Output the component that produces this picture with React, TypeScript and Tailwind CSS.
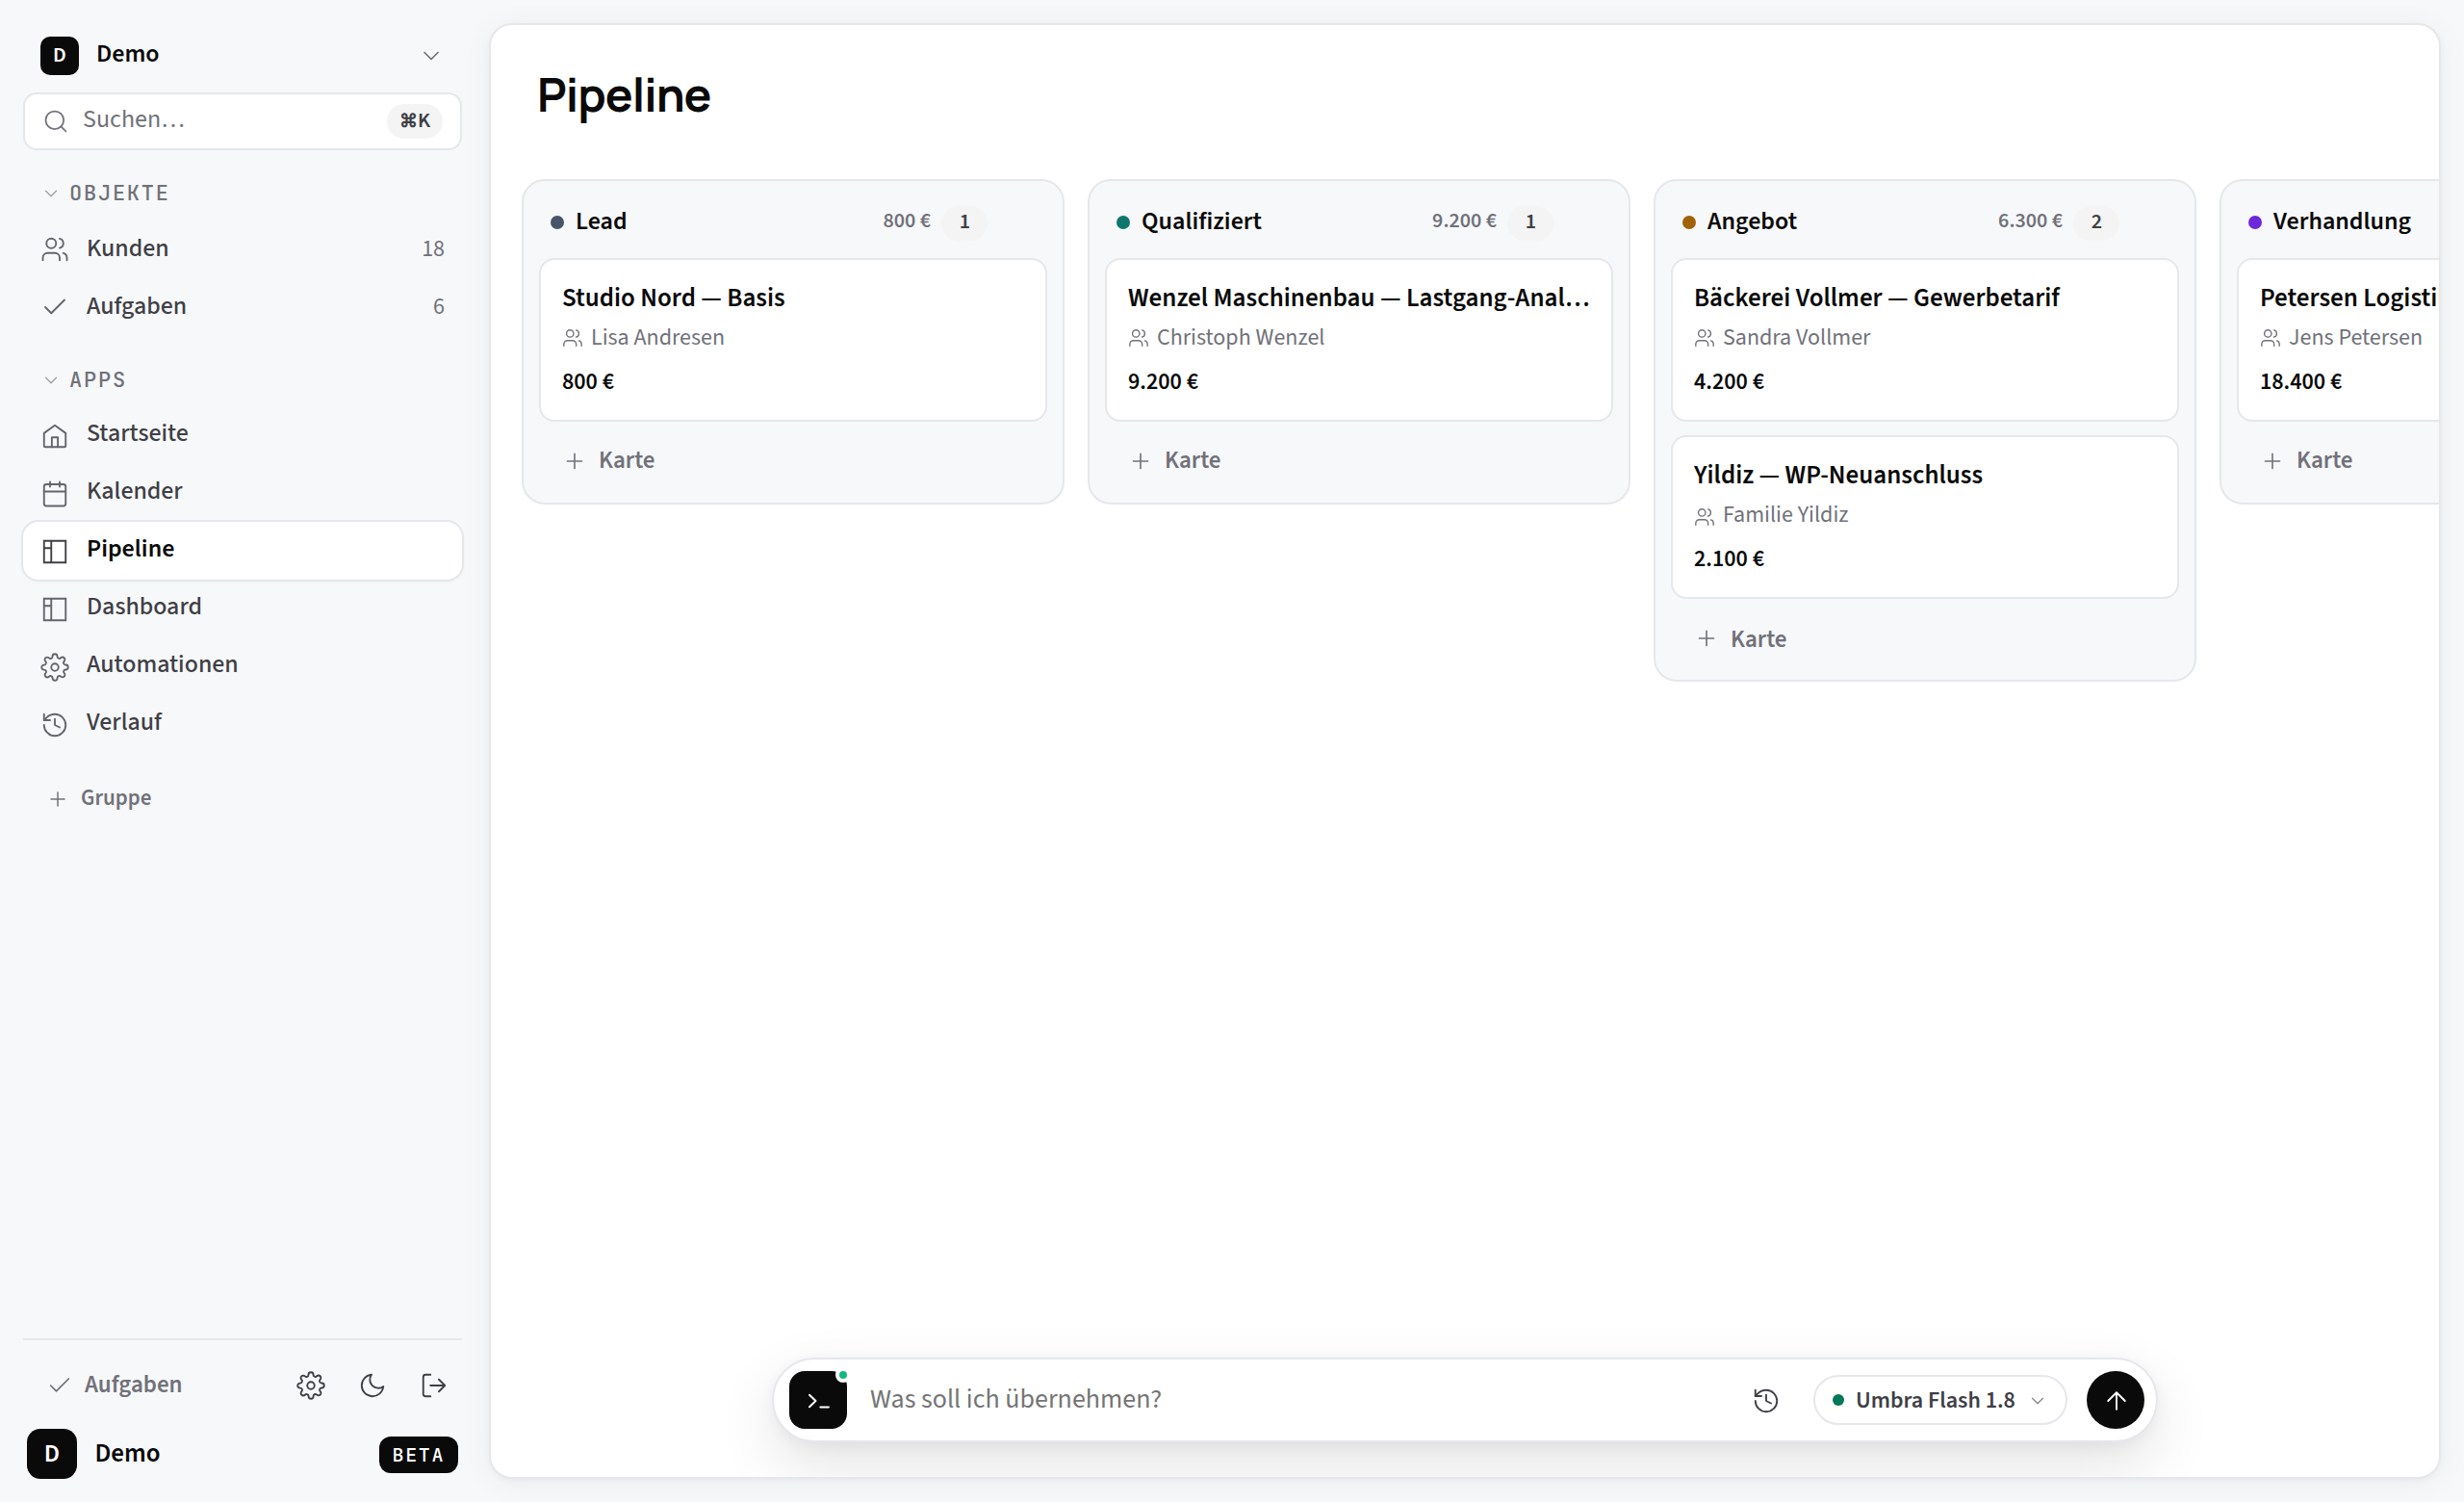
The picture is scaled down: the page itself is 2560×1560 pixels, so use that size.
import type { ReactNode } from "react";

type IconProps = { className: string; children: ReactNode };

function Icon({ className, children }: IconProps) {
  return (
    <svg
      viewBox="0 0 24 24"
      fill="none"
      stroke="currentColor"
      strokeWidth={1.5}
      strokeLinecap="round"
      strokeLinejoin="round"
      className={`shrink-0 ${className}`}
    >
      {children}
    </svg>
  );
}

const glyphs = {
  chevron: <path d="m6 9 6 6 6-6" />,
  plus: <path d="M5 12h14M12 5v14" />,
  check: <path d="M20 6 9 17l-5-5" />,
  arrowUp: <path d="m5 12 7-7 7 7M12 19V5" />,
  search: (
    <>
      <circle cx="11" cy="11" r="8" />
      <path d="m21 21-4.35-4.35" />
    </>
  ),
  users: (
    <>
      <path d="M16 21v-2a4 4 0 0 0-4-4H6a4 4 0 0 0-4 4v2" />
      <circle cx="9" cy="7" r="4" />
      <path d="M22 21v-2a4 4 0 0 0-3-3.87M16 3.13a4 4 0 0 1 0 7.75" />
    </>
  ),
  home: (
    <>
      <path d="M3 9.5 12 3l9 6.5V20a1 1 0 0 1-1 1H4a1 1 0 0 1-1-1V9.5Z" />
      <path d="M9.5 21v-8h5v8" />
    </>
  ),
  calendar: (
    <>
      <rect x="3" y="4" width="18" height="18" rx="2" />
      <path d="M16 2v4M8 2v4M3 10h18" />
    </>
  ),
  board: <path strokeLinejoin="miter" strokeLinecap="butt" d="M3 3h18v18H3zM9 3v18M3 9h6" />,
  gear: (
    <>
      <circle cx="12" cy="12" r="3" />
      <path d="M19.4 15a1.65 1.65 0 0 0 .33 1.82l.06.06a2 2 0 0 1 0 2.83 2 2 0 0 1-2.83 0l-.06-.06a1.65 1.65 0 0 0-1.82-.33 1.65 1.65 0 0 0-1 1.51V21a2 2 0 0 1-2 2 2 2 0 0 1-2-2v-.09A1.65 1.65 0 0 0 9 19.4a1.65 1.65 0 0 0-1.82.33l-.06.06a2 2 0 0 1-2.83 0 2 2 0 0 1 0-2.83l.06-.06a1.65 1.65 0 0 0 .33-1.82 1.65 1.65 0 0 0-1.51-1H3a2 2 0 0 1-2-2 2 2 0 0 1 2-2h.09A1.65 1.65 0 0 0 4.6 9a1.65 1.65 0 0 0-.33-1.82l-.06-.06a2 2 0 0 1 0-2.83 2 2 0 0 1 2.83 0l.06.06a1.65 1.65 0 0 0 1.82.33H9a1.65 1.65 0 0 0 1-1.51V3a2 2 0 0 1 2-2 2 2 0 0 1 2 2v.09a1.65 1.65 0 0 0 1 1.51 1.65 1.65 0 0 0 1.82-.33l.06-.06a2 2 0 0 1 2.83 0 2 2 0 0 1 0 2.83l-.06.06a1.65 1.65 0 0 0-.33 1.82V9a1.65 1.65 0 0 0 1.51 1H21a2 2 0 0 1 2 2 2 2 0 0 1-2 2h-.09a1.65 1.65 0 0 0-1.51 1z" />
    </>
  ),
  history: (
    <>
      <path d="M3 12a9 9 0 1 0 9-9 9.75 9.75 0 0 0-6.74 2.74L3 8" />
      <path d="M3 3v5h5M12 7v5l4 2" />
    </>
  ),
  moon: <path d="M21 12.79A9 9 0 1 1 11.21 3 7 7 0 0 0 21 12.79z" />,
  logout: <path d="M9 21H5a2 2 0 0 1-2-2V5a2 2 0 0 1 2-2h4M16 17l5-5-5-5M21 12H9" />,
};

type NavItem = { label: string; icon: ReactNode; count?: number; active?: boolean };

const objects: NavItem[] = [
  { label: "Kunden", icon: glyphs.users, count: 18 },
  { label: "Aufgaben", icon: glyphs.check, count: 6 },
];

const apps: NavItem[] = [
  { label: "Startseite", icon: glyphs.home },
  { label: "Kalender", icon: glyphs.calendar },
  { label: "Pipeline", icon: glyphs.board, active: true },
  { label: "Dashboard", icon: glyphs.board },
  { label: "Automationen", icon: glyphs.gear },
  { label: "Verlauf", icon: glyphs.history },
];

type Deal = { title: string; person: string; amount: string };
type Stage = { name: string; dot: string; total: string; deals: Deal[] };

const stages: Stage[] = [
  {
    name: "Lead",
    dot: "bg-[#475569]",
    total: "800 €",
    deals: [{ title: "Studio Nord — Basis", person: "Lisa Andresen", amount: "800 €" }],
  },
  {
    name: "Qualifiziert",
    dot: "bg-[#0f766e]",
    total: "9.200 €",
    deals: [{ title: "Wenzel Maschinenbau — Lastgang-Analyse", person: "Christoph Wenzel", amount: "9.200 €" }],
  },
  {
    name: "Angebot",
    dot: "bg-[#a16207]",
    total: "6.300 €",
    deals: [
      { title: "Bäckerei Vollmer — Gewerbetarif", person: "Sandra Vollmer", amount: "4.200 €" },
      { title: "Yildiz — WP-Neuanschluss", person: "Familie Yildiz", amount: "2.100 €" },
    ],
  },
  {
    name: "Verhandlung",
    dot: "bg-[#6d28d9]",
    total: "18.400 €",
    deals: [{ title: "Petersen Logistik — Rahmenvertrag", person: "Jens Petersen", amount: "18.400 €" }],
  },
];

function SectionHeading({ label }: { label: string }) {
  return (
    <div className="flex h-[30px] items-center gap-2 pl-[18px]">
      <Icon className="size-[22px] text-[#a1a1aa]">{glyphs.chevron}</Icon>
      <span className="font-['JetBrains_Mono',monospace] text-[22px] leading-[30px] font-medium tracking-[0.08em] text-[#71717a]">
        {label}
      </span>
    </div>
  );
}

function NavRow({ item, lowIcon }: { item: NavItem; lowIcon?: boolean }) {
  return (
    <div
      className={`flex h-[60px] items-center gap-[18px] rounded-[16px] px-[18px] ${
        item.active
          ? "bg-white font-semibold text-[#0a0a0a] shadow-[0_0_0_2px_#e5e7eb,0_2px_4px_2px_rgba(0,0,0,0.02)]"
          : "font-medium text-[#3f3f46]"
      }`}
    >
      <span className={`${lowIcon ? "pt-[2px]" : "pb-[2px]"} ${item.active ? "text-[#3f3f46]" : "text-[#64646c]"}`}>
        <Icon className="block size-[30px]">{item.icon}</Icon>
      </span>
      <span className="flex-1 pb-[4px] text-[26px] leading-[36px]">{item.label}</span>
      {item.count !== undefined && (
        <span className="pb-[2px] text-[24px] leading-[36px] font-normal text-[#71717a]">{item.count}</span>
      )}
    </div>
  );
}

function Sidebar() {
  return (
    <aside className="flex w-[508px] shrink-0 flex-col pr-[28px] pl-[24px]">
      <div className="mt-[34px] flex h-[48px] items-center px-[18px]">
        <span className="flex size-[40px] items-center justify-center rounded-[10px] bg-[#0a0a0a] pb-[2px] text-[22px] leading-[30px] font-semibold text-white">
          D
        </span>
        <span className="flex-1 pb-[4px] pl-[18px] text-[26px] leading-[36px] font-semibold text-[#0a0a0a]">Demo</span>
        <Icon className="size-[28px] text-[#71717a]">{glyphs.chevron}</Icon>
      </div>

      <div className="mt-[14px] flex h-[60px] items-center rounded-[14px] border-2 border-[#e5e7eb] bg-white pr-[18px] pl-[18px]">
        <Icon className="size-[28px] text-[#71717a]">{glyphs.search}</Icon>
        <span className="flex-1 pb-[4px] pl-[14px] text-[26px] leading-[36px] text-[#71717a]">Suchen…</span>
        <kbd className="flex h-[36px] w-[58px] items-center justify-center rounded-full bg-[#f4f4f5] font-['Source_Sans_3',sans-serif] text-[22px] leading-[30px] font-semibold text-[#3f3f46]">
          <span className="pb-[4px] font-['Noto_Sans_Symbols',sans-serif] text-[19px] leading-[30px]">⌘</span>
          <span className="pb-[2px]">K</span>
        </kbd>
      </div>

      <div className="mt-[30px]">
        <SectionHeading label="OBJEKTE" />
      </div>
      <nav className="mt-[14px]">
        {objects.map((item) => (
          <NavRow key={item.label} item={item} />
        ))}
      </nav>

      <div className="mt-[30px]">
        <SectionHeading label="APPS" />
      </div>
      <nav className="mt-[12px]">
        {apps.map((item) => (
          <NavRow key={item.label} item={item} lowIcon />
        ))}
      </nav>

      <div className="mt-[24px] flex h-[48px] items-center gap-3 pl-[24px] text-[#71717a]">
        <Icon className="size-[24px]">{glyphs.plus}</Icon>
        <span className="pb-[2px] text-[23px] leading-[32px] font-semibold">Gruppe</span>
      </div>

      <div className="mt-auto border-t-2 border-[#e5e7eb]">
        <div className="mt-[23px] flex h-[48px] items-center pr-[14px] pl-[24px]">
          <Icon className="size-[28px] text-[#71717a]">{glyphs.check}</Icon>
          <span className="flex-1 pb-[2px] pl-[12px] text-[25px] leading-[36px] font-semibold text-[#71717a]">
            Aufgaben
          </span>
          <div className="flex items-center gap-[34px] text-[#3f3f46]">
            <Icon className="size-[30px]">{glyphs.gear}</Icon>
            <Icon className="size-[30px]">{glyphs.moon}</Icon>
            <Icon className="size-[30px]">{glyphs.logout}</Icon>
          </div>
        </div>
        <div className="mt-[21px] mb-[24px] flex h-[52px] items-center pr-[4px] pl-[4px]">
          <span className="flex size-[52px] items-center justify-center rounded-[14px] bg-[#0a0a0a] text-[26px] leading-[36px] font-semibold text-white">
            D
          </span>
          <span className="flex-1 pl-[18.5px] text-[27px] leading-[36px] font-semibold text-[#0a0a0a]">Demo</span>
          <span className="flex h-[38px] items-center rounded-[12px] bg-[#0a0a0a] px-[14px] mt-[2px] font-['JetBrains_Mono',monospace] text-[20px] font-medium tracking-[0.08em] text-white">
            BETA
          </span>
        </div>
      </div>
    </aside>
  );
}

function DealCard({ deal, offset }: { deal: Deal; offset: boolean }) {
  return (
    <article className="h-[170px] rounded-[16px] border-2 border-[#e5e7eb] bg-white px-[22px] pt-[22px]">
      <h3 className="truncate text-[27px] leading-[36px] font-semibold text-[#0a0a0a]">{deal.title}</h3>
      <div className="mt-[6px] flex h-[34px] items-center gap-[8px] text-[#71717a]">
        <Icon className={offset ? "mt-[4px] size-[22px]" : "size-[22px]"}>{glyphs.users}</Icon>
        <span className="text-[24px] leading-[34px]">{deal.person}</span>
      </div>
      <p className="mt-[11px] text-[24px] leading-[36px] font-semibold text-[#0a0a0a]">{deal.amount}</p>
    </article>
  );
}

function StageColumn({ stage }: { stage: Stage }) {
  return (
    <section className="w-[564px] shrink-0 rounded-[24px] border-2 border-[#e5e7eb] bg-[#f7f8fa] px-[16px] pb-[16px]">
      <header className="flex h-[80px] items-center pt-[8px] pr-[62px] pl-[12px]">
        <span className={`mb-[2px] size-[14px] shrink-0 rounded-full ${stage.dot}`} />
        <h2 className="flex-1 pb-[4px] pl-[12px] text-[26px] leading-[36px] font-semibold text-[#0a0a0a]">{stage.name}</h2>
        <span className="pb-[6px] text-[22px] leading-[30px] font-semibold text-[#71717a]">{stage.total}</span>
        <span className="ml-[11px] flex h-[36px] w-[48px] items-center justify-center rounded-full bg-[#f4f4f5] pb-[5px] pl-px text-[22px] leading-[30px] font-semibold text-[#3f3f46]">
          {stage.deals.length}
        </span>
      </header>
      <div className="flex flex-col gap-[14px]">
        {stage.deals.map((deal, index) => (
          <DealCard key={deal.title} deal={deal} offset={index > 0} />
        ))}
      </div>
      <div className="mt-[11px] flex h-[57px] items-center gap-[12px] pt-[3px] pl-[24px] text-[#71717a]">
        <Icon className="size-[26px]">{glyphs.plus}</Icon>
        <span className={`text-[25px] leading-[36px] font-semibold ${stage.deals.length > 1 ? "pt-[2px]" : "pb-[2px]"}`}>
          Karte
        </span>
      </div>
    </section>
  );
}

function CommandBar() {
  return (
    <div className="mx-auto mb-[36px] flex h-[88px] w-[1440px] items-center rounded-full border-2 border-[#e5e7eb] bg-white pr-[12px] pl-[16px] shadow-[0_24px_64px_rgba(0,0,0,0.11),0_4px_16px_rgba(0,0,0,0.05)]">
      <div className="relative size-[60px] rounded-[16px] bg-[#0a0a0a] text-white">
        <svg
          viewBox="0 0 60 60"
          fill="none"
          stroke="currentColor"
          strokeWidth={2}
          strokeLinecap="round"
          strokeLinejoin="round"
          className="size-[60px]"
        >
          <path d="m21 24.8 6.5 6.2-6.5 6.2M32.3 37.6h8.6" />
        </svg>
        <span className="absolute -top-1 -right-1 size-4 rounded-full border-4 border-white bg-[#10b981]" />
      </div>
      <span className="flex-1 pb-[2px] pl-[24px] text-[28px] leading-[40px] text-[#757575]">Was soll ich übernehmen?</span>
      <Icon className="mt-[2px] size-[30px] text-[#3f3f46]">{glyphs.history}</Icon>
      <div className="ml-[34px] flex h-[52px] w-[264px] items-center rounded-full border-2 border-[#e5e7eb] pl-[18px] text-[#3f3f46]">
        <span className="size-[12px] rounded-full bg-[#047857]" />
        <span className="pt-px pl-[12px] text-[24px] leading-[34px] font-semibold">Umbra Flash 1.8</span>
        <Icon className="mt-[2px] ml-[12px] size-[22px] text-[#8b8b93]">{glyphs.chevron}</Icon>
      </div>
      <button className="ml-[20px] flex size-[60px] items-center justify-center rounded-full bg-[#0a0a0a] pt-[2px] pl-[2px] text-white">
        <Icon className="size-[30px]">{glyphs.arrowUp}</Icon>
      </button>
    </div>
  );
}

export default function App() {
  return (
    <div className="flex h-[1560px] w-[2560px] overflow-hidden bg-[#f7f8fa] font-['Source_Sans_3',sans-serif]">
      <Sidebar />
      <main className="my-[24px] mr-[24px] flex min-w-0 flex-1 flex-col overflow-hidden rounded-[24px] border-2 border-[#e5e7eb] bg-white shadow-[0_4px_32px_rgba(10,10,20,0.05),0_2px_6px_rgba(10,10,20,0.03)]">
        <h1 className="mt-[40px] pl-[48px] font-['Manrope',sans-serif] text-[48px] leading-[64px] font-bold tracking-[-0.02em] text-[#0a0a0a]">
          Pipeline
        </h1>
        <div className="mt-[56px] flex flex-1 items-start gap-[24px] pl-[32px]">
          {stages.map((stage) => (
            <StageColumn key={stage.name} stage={stage} />
          ))}
        </div>
        <CommandBar />
      </main>
    </div>
  );
}
